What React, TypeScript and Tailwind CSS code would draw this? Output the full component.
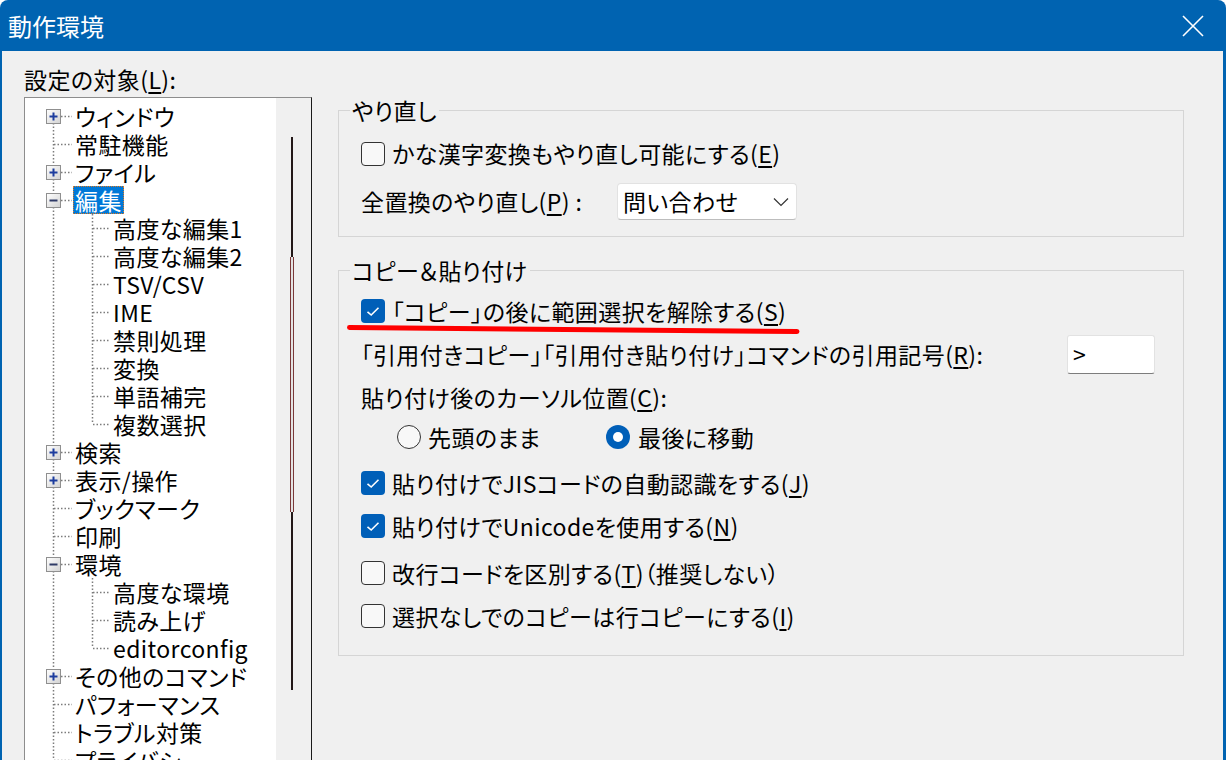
import React from "react";

type TreeNode = {
  label: string;
  level: 1 | 2;
  toggle?: "plus" | "minus";
  last?: boolean;
  selected?: boolean;
};

const tree: TreeNode[] = [
  { label: "ウィンドウ", level: 1, toggle: "plus" },
  { label: "常駐機能", level: 1 },
  { label: "ファイル", level: 1, toggle: "plus" },
  { label: "編集", level: 1, toggle: "minus", selected: true },
  { label: "高度な編集1", level: 2 },
  { label: "高度な編集2", level: 2 },
  { label: "TSV/CSV", level: 2 },
  { label: "IME", level: 2 },
  { label: "禁則処理", level: 2 },
  { label: "変換", level: 2 },
  { label: "単語補完", level: 2 },
  { label: "複数選択", level: 2, last: true },
  { label: "検索", level: 1, toggle: "plus" },
  { label: "表示/操作", level: 1, toggle: "plus" },
  { label: "ブックマーク", level: 1 },
  { label: "印刷", level: 1 },
  { label: "環境", level: 1, toggle: "minus" },
  { label: "高度な環境", level: 2 },
  { label: "読み上げ", level: 2 },
  { label: "editorconfig", level: 2, last: true },
  { label: "その他のコマンド", level: 1, toggle: "plus" },
  { label: "パフォーマンス", level: 1 },
  { label: "トラブル対策", level: 1 },
  { label: "プライバシー", level: 1 },
];

const DOT = { stroke: "#7c7c7c", strokeWidth: 1.5, strokeDasharray: "1.5 2" };

function Connector({ node, first }: { node: TreeNode; first: boolean }) {
  const w = node.level === 1 ? 48 : 86;
  return (
    <svg width={w} height="28" className="shrink-0">
      <line x1="28.5" y1={first ? 14 : 0} x2="28.5" y2="28" {...DOT} />
      {node.level === 1 ? (
        <line x1={node.toggle ? 36 : 29} y1="14.5" x2="47" y2="14.5" {...DOT} />
      ) : (
        <>
          <line x1="67.5" y1="0" x2="67.5" y2={node.last ? 14 : 28} {...DOT} />
          <line x1="68" y1="14.5" x2="85" y2="14.5" {...DOT} />
        </>
      )}
      {node.toggle && (
        <>
          <defs>
            <linearGradient id="tg" x1="0" y1="0" x2="1" y2="1">
              <stop offset="0" stopColor="#ffffff" />
              <stop offset="1" stopColor="#d2d2d2" />
            </linearGradient>
          </defs>
          <rect x="21.5" y="7.5" width="14" height="14" fill="url(#tg)" stroke="#8f8f8f" />
          <line x1="24.5" y1="14.5" x2="32.5" y2="14.5" stroke={node.toggle === "plus" ? "#1d3d9e" : "#2f3a66"} strokeWidth="2" />
          {node.toggle === "plus" && (
            <line x1="28.5" y1="10.5" x2="28.5" y2="18.5" stroke="#1d3d9e" strokeWidth="2" />
          )}
        </>
      )}
    </svg>
  );
}

function Checkbox({ checked = false }: { checked?: boolean }) {
  return checked ? (
    <span className="flex h-[24px] w-[24px] shrink-0 items-center justify-center rounded-[4px] bg-[#005fb8]">
      <svg width="14" height="11" viewBox="0 0 14 11">
        <path d="M1.5 5.8 L5.2 9 L12.5 1.8" fill="none" stroke="white" strokeWidth="1.6" />
      </svg>
    </span>
  ) : (
    <span className="h-[24px] w-[24px] shrink-0 rounded-[4px] border-[1.5px] border-[#333333] bg-[#f8f8f8]" />
  );
}

function Radio({ checked = false }: { checked?: boolean }) {
  return checked ? (
    <span className="flex h-[24px] w-[24px] shrink-0 items-center justify-center rounded-full bg-[#005fb8]">
      <span className="h-[10px] w-[10px] rounded-full bg-white" />
    </span>
  ) : (
    <span className="h-[24px] w-[24px] shrink-0 rounded-full border-[1.5px] border-[#333333] bg-[#f8f8f8]" />
  );
}

const Key = ({ k }: { k: string }) => (
  <>
    (<u className="underline-offset-[3px]">{k}</u>)
  </>
);

export default function App() {
  return (
    <div className="h-[760px] w-[1226px] overflow-hidden bg-white font-['Noto_Sans_CJK_JP',sans-serif] text-[23px] tracking-[0.4px] text-black [font-feature-settings:'palt']">
      <div className="flex h-[800px] flex-col rounded-t-[8px] bg-[#0063b1] pl-[2px] pr-[3px]">
        <div className="flex h-[51px] shrink-0 items-center justify-between pl-[6px] pr-[19px] text-white">
          <span className="text-[24px] leading-none tracking-normal">動作環境</span>
          <svg width="22" height="22" viewBox="0 0 22 22">
            <path d="M1 1 L21 21 M21 1 L1 21" stroke="white" strokeWidth="1.6" />
          </svg>
        </div>

        <div className="flex flex-1 bg-[#f0f0f0]">
          {/* tree */}
          <div className="pl-[22px] pt-[16px]">
            <div className="leading-[24px]">
              設定の対象<Key k="L" />:
            </div>
            <div className="mt-[6px] flex h-[700px] w-[288px] border border-[#8d8d8d] border-r-[#1a1a1a]">
              <div className="w-[251px] overflow-hidden bg-white pt-[4px]">
                {tree.map((node, i) => (
                  <div key={node.label} className="flex h-[28px] items-center whitespace-nowrap">
                    <Connector node={node} first={i === 0} />
                    <span
                      className={
                        node.selected
                          ? "border border-dotted border-[#e07a1f] bg-[#0078d7] px-[1px] leading-[26px] text-white"
                          : "px-[2px] leading-[26px]"
                      }
                    >
                      {node.label}
                    </span>
                  </div>
                ))}
              </div>
              <div className="flex w-[34px] flex-col bg-[#f0f0f0] pl-[15px] pt-[39px]">
                <div className="h-[120px] w-[2px] bg-[#231818]" />
                <div className="ml-[-1px] h-[255px] w-[4px] border-x border-[#7a3838] bg-[#e4e4e4]" />
                <div className="h-[178px] w-[2px] bg-[#231818]" />
              </div>
            </div>
          </div>

          {/* settings */}
          <div className="ml-[26px] w-[846px] pt-[47px]">
            <fieldset className="border border-[#d5d5d5]">
              <legend className="ml-[11px] px-[2px] leading-[24px]">やり直し</legend>
              <div className="px-[22px] pb-[16px] pt-[13px]">
                <div className="flex h-[37px] items-center gap-[7px]">
                  <Checkbox />
                  <span>
                    かな漢字変換もやり直し可能にする<Key k="E" />
                  </span>
                </div>
                <div className="mt-[11px] flex h-[37px] items-center">
                  <span className="w-[256px]">
                    全置換のやり直し<Key k="P" /> :
                  </span>
                  <div className="flex h-[37px] w-[180px] items-center justify-between rounded-[4px] border border-[#e2e2e2] border-b-[#bdbdbd] bg-white pl-[5px] pr-[7px]">
                    <span>問い合わせ</span>
                    <svg width="16" height="10" viewBox="0 0 16 10">
                      <path d="M1 1.5 L8 8.5 L15 1.5" fill="none" stroke="#333" strokeWidth="1.2" />
                    </svg>
                  </div>
                </div>
              </div>
            </fieldset>

            <fieldset className="mt-[21px] border border-[#d5d5d5]">
              <legend className="ml-[11px] px-[2px] leading-[24px]">コピー＆貼り付け</legend>
              <div className="pb-[21px] pl-[22px] pr-[28px]">
                <div className="relative mt-[11px] flex h-[36px] items-center gap-[7px]">
                  <Checkbox checked />
                  <span>
                    「コピー」の後に範囲選択を解除する<Key k="S" />
                  </span>
                  <svg width="460" height="12" className="absolute left-[-14px] top-[31px]">
                    <path d="M2.5 3.5 Q 220 4.5 450 7.5" fill="none" stroke="#ff0000" strokeWidth="5" strokeLinecap="round" />
                  </svg>
                </div>
                <div className="mt-[6px] flex h-[39px] items-center justify-between">
                  <span>
                    「引用付きコピー」「引用付き貼り付け」コマンドの引用記号<Key k="R" />:
                  </span>
                  <div className="flex h-[39px] w-[88px] items-center rounded-[3px] border border-[#e2e2e2] border-b-[#7d7d7d] bg-white pl-[5px]">
                    &gt;
                  </div>
                </div>
                <div className="mt-[5px] flex h-[36px] items-center">
                  貼り付け後のカーソル位置<Key k="C" />:
                </div>
                <div className="mt-[4px] flex h-[36px] items-center pl-[36px]">
                  <div className="flex w-[209px] items-center gap-[7px]">
                    <Radio />
                    <span>先頭のまま</span>
                  </div>
                  <div className="flex items-center gap-[8px]">
                    <Radio checked />
                    <span>最後に移動</span>
                  </div>
                </div>
                <div className="mt-[10px] flex h-[36px] items-center gap-[7px]">
                  <Checkbox checked />
                  <span>
                    貼り付けでJISコードの自動認識をする<Key k="J" />
                  </span>
                </div>
                <div className="mt-[7px] flex h-[36px] items-center gap-[7px]">
                  <Checkbox checked />
                  <span>
                    貼り付けでUnicodeを使用する<Key k="N" />
                  </span>
                </div>
                <div className="mt-[11px] flex h-[36px] items-center gap-[7px]">
                  <Checkbox />
                  <span>
                    改行コードを区別する<Key k="T" />（推奨しない）
                  </span>
                </div>
                <div className="mt-[7px] flex h-[36px] items-center gap-[7px]">
                  <Checkbox />
                  <span>
                    選択なしでのコピーは行コピーにする<Key k="I" />
                  </span>
                </div>
              </div>
            </fieldset>
          </div>
        </div>
      </div>
    </div>
  );
}
